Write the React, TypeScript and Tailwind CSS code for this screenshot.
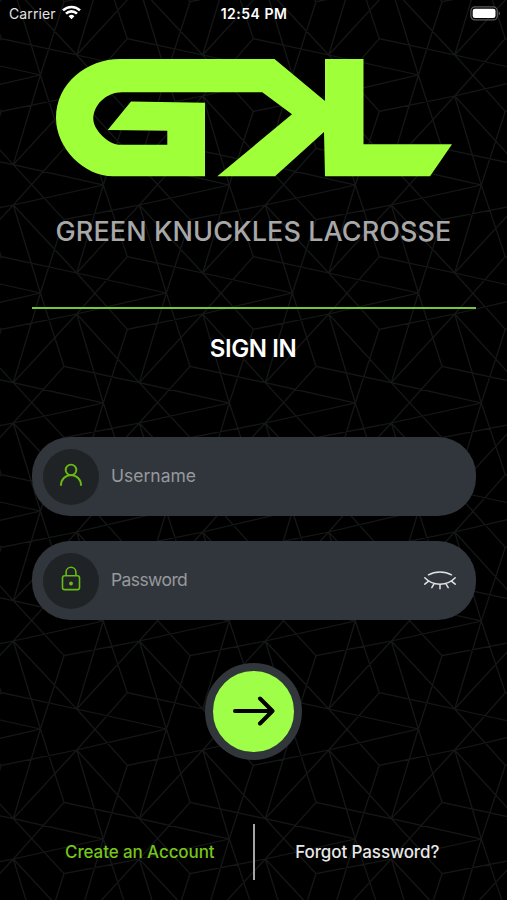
import { useState } from "react";
import type { ReactNode } from "react";

type Point = [number, number];

const TILE_W = 126;
const TILE_H = 218;

const LINES: [Point, Point][] = [
  [[13.3, 198.7], [40.4, 109]],
  [[13.3, 198.7], [76.7, 130]],
  [[13.3, 198.7], [103.3, 219]],
  [[64, 182.3], [139.3, 198.7]],
  [[76.7, 130], [139.3, 198.7]],
  [[139.3, 198.7], [190, 253.7]],
  [[76.7, 89], [166.4, 109]],
  [[76.7, 130], [166.4, 109]],
  [[40.4, 109], [64, 35.7]],
  [[40.4, 109], [13.3, 21]],
  [[40.4, 109], [64, 182.3]],
  [[76.7, 89], [13.3, 21]],
  [[76.7, 89], [103.3, 1]],
  [[76.7, 89], [139.3, 21]],
  [[76.7, 89], [127.3, 145.3]],
  [[1.3, 72.7], [76.7, 89]],
  [[76.7, 130], [103.3, 219]],
  [[76.7, 130], [127.3, 72.7]],
  [[76.7, 130], [1.3, 145.3]],
  [[127.3, 72.7], [103.3, 1]],
  [[127.3, 145.3], [103.3, 219]],
  [[64, 35.7], [139.3, 21]],
  [[13.3, 21], [103.3, 1]],
  [[64, 182.3], [13.3, 239]],
];

const meshPath = [-1, 0, 1]
  .flatMap((col) =>
    [-1, 0, 1].flatMap((row) =>
      LINES.map(([[x1, y1], [x2, y2]]) => {
        const dx = col * TILE_W;
        const dy = row * TILE_H;
        return `M${x1 + dx} ${y1 + dy}L${x2 + dx} ${y2 + dy}`;
      })
    )
  )
  .join("");

function MeshBackground() {
  return (
    <svg className="absolute inset-0 h-full w-full" aria-hidden="true">
      <defs>
        <pattern
          id="mesh"
          width={TILE_W}
          height={TILE_H}
          y={-34}
          patternUnits="userSpaceOnUse"
        >
          <path d={meshPath} fill="none" stroke="#151717" strokeWidth="1.2" />
        </pattern>
      </defs>
      <rect width="100%" height="100%" fill="url(#mesh)" />
    </svg>
  );
}

function StatusBar() {
  return (
    <div className="grid h-[26px] grid-cols-3 items-center pr-[6px] pl-[9px] text-[14px] text-[#e2e2e2]">
      <div className="flex items-center gap-[6px]">
        <span className="tracking-[0.1px]">Carrier</span>
        <svg className="-mt-px" width="19" height="15" viewBox="0 0 19 15">
          <g fill="none" stroke="#fff" strokeWidth="2.6">
            <path d="M1 5.4a12.2 12.2 0 0 1 17 0" />
            <path d="M4 8.6a7.9 7.9 0 0 1 11 0" />
          </g>
          <path d="M9.5 14.2 6.6 11.2a4.1 4.1 0 0 1 5.8 0Z" fill="#fff" />
        </svg>
      </div>
      <span className="-ml-[2px] text-center font-semibold tracking-[0.5px] whitespace-nowrap text-white">
        12:54 PM
      </span>
      <svg className="justify-self-end" width="31" height="15" viewBox="0 0 31 15">
        <rect x="0.9" y="0.9" width="26.4" height="13" rx="4" fill="none" stroke="#5b5b5d" strokeWidth="1.2" />
        <rect x="2.7" y="2.7" width="22.8" height="9.4" rx="2.3" fill="#fff" />
        <path d="M28.6 5.2c1.8.7 1.8 3.7 0 4.4Z" fill="#5b5b5d" />
      </svg>
    </div>
  );
}

function Logo() {
  return (
    <svg width="396" height="118" viewBox="56 59 396 118" aria-label="GKL">
      <path
        fill="#9fff38"
        d="M120 59H274.5L325 101V59H363.5V144.3H452L430 176.3H325L324 132L275 176.3H217.3L292 114.3L262.3 92.2H122C106 92.2 93.3 105 93.3 119C93.3 130 109 144.7 119 144.7H167.3V130.8L107.7 130L131 101.5L205 102.8V176.3H113C84 176.3 56 148 56 118C56 83 87 59 120 59Z"
      />
    </svg>
  );
}

function UserIcon() {
  return (
    <svg className="-mt-1" width="24" height="24" viewBox="0 0 24 24" fill="none" stroke="#67bb12" strokeWidth="1.9" strokeLinecap="round">
      <circle cx="12" cy="6.9" r="5.3" />
      <path d="M2 22.1c0-5.7 4.4-10 10-10s10 4.3 10 10" />
    </svg>
  );
}

function LockIcon() {
  return (
    <svg className="-mt-[5px] -ml-px" width="20" height="25" viewBox="0 0 20 25" fill="none" stroke="#67bb12" strokeWidth="1.6">
      <rect x="1.5" y="9.8" width="17" height="13.8" rx="2.2" />
      <path d="M5.1 9.8V6.2a4.9 4.9 0 0 1 9.8 0v3.6" />
      <circle cx="10" cy="17.5" r="1.9" fill="#67bb12" stroke="none" />
    </svg>
  );
}

function ClosedEyeIcon() {
  return (
    <svg className="-mt-[2px]" width="34" height="20" viewBox="0 0 34 20" fill="none" stroke="#dfe1e3" strokeWidth="1.5" strokeLinecap="round">
      <path d="M5.5 4.8C12 .9 22 .9 28.5 4.8" />
      <path d="M1.8 7.8C10 16.4 24 16.4 32.2 7.8" />
      <path d="M5.6 11.2 1.8 14.2M11 13.8l-2.2 3.8M17 14.4v4.4M23 13.8l2.2 3.8M28.4 11.2l3.8 3" />
    </svg>
  );
}

type FieldProps = {
  type: string;
  placeholder: string;
  value: string;
  onChange: (value: string) => void;
  icon: ReactNode;
  action?: ReactNode;
  inputClass?: string;
};

function Field({ type, placeholder, value, onChange, icon, action, inputClass = "" }: FieldProps) {
  return (
    <label className="flex h-[79px] items-center rounded-[38px] bg-[#31363c] pr-[19px] pl-[11px]">
      <span className="flex size-14 shrink-0 items-center justify-center rounded-full bg-[#1f2326]">
        {icon}
      </span>
      <input
        type={type}
        placeholder={placeholder}
        value={value}
        onChange={(e) => onChange(e.target.value)}
        className={`ml-3 min-w-0 flex-1 bg-transparent text-[17.5px] text-white outline-none placeholder:text-[#96999c] ${inputClass}`}
      />
      {action}
    </label>
  );
}

export default function App() {
  const [username, setUsername] = useState("");
  const [password, setPassword] = useState("");
  const [showPassword, setShowPassword] = useState(false);

  return (
    <div className="relative h-[900px] w-[507px] overflow-hidden bg-black font-['Inter','Liberation_Sans',sans-serif]">
      <MeshBackground />
      <div className="relative flex h-full flex-col">
        <StatusBar />
        <header className="mt-[33px] flex flex-col items-center">
          <Logo />
          <h1 className="mt-[37px] text-[27px] leading-9 font-medium tracking-[0.08px] whitespace-nowrap text-[#a8a8a8]">
            GREEN KNUCKLES LACROSSE
          </h1>
        </header>
        <form
          className="mt-[57px] mr-[31px] ml-8 flex flex-col border-t-2 border-[#76c53b]"
          onSubmit={(e) => e.preventDefault()}
        >
          <h2 className="mt-6 mr-[2px] text-center text-[24px] leading-8 font-semibold tracking-[-0.4px] text-white">
            SIGN IN
          </h2>
          <div className="mt-[72px] flex flex-col gap-[25px]">
            <Field
              type="text"
              placeholder="Username"
              value={username}
              onChange={setUsername}
              icon={<UserIcon />}
            />
            <Field
              type={showPassword ? "text" : "password"}
              placeholder="Password"
              value={password}
              onChange={setPassword}
              icon={<LockIcon />}
              inputClass="placeholder:tracking-[-0.6px]"
              action={
                <button
                  type="button"
                  aria-label="Toggle password"
                  onClick={() => setShowPassword(!showPassword)}
                >
                  <ClosedEyeIcon />
                </button>
              }
            />
          </div>
          <button
            type="submit"
            aria-label="Sign in"
            className="mt-[43px] mr-px flex size-[97px] items-center justify-center self-center rounded-full border-8 border-[#31363a] bg-[#9fff48]"
          >
            <svg className="-mt-px" width="42" height="32" viewBox="0 0 42 32" fill="none" stroke="#000" strokeWidth="4" strokeLinecap="round" strokeLinejoin="round">
              <path d="M2 16H39M27 3.5L39.5 16L27 28.5" />
            </svg>
          </button>
        </form>
        <footer className="mt-16 flex h-14 items-center">
          <a className="flex-1 pt-[2px] pl-[27px] text-center text-[17px] font-medium tracking-[-0.1px] text-[#76c51c]" href="#">
            Create an Account
          </a>
          <div className="h-full w-[2px] bg-[#a5a5a5]" />
          <a className="flex-1 pt-[2px] pr-[27px] text-center text-[17px] font-medium tracking-[-0.1px] text-[#e8e8e8]" href="#">
            Forgot Password?
          </a>
        </footer>
      </div>
    </div>
  );
}
